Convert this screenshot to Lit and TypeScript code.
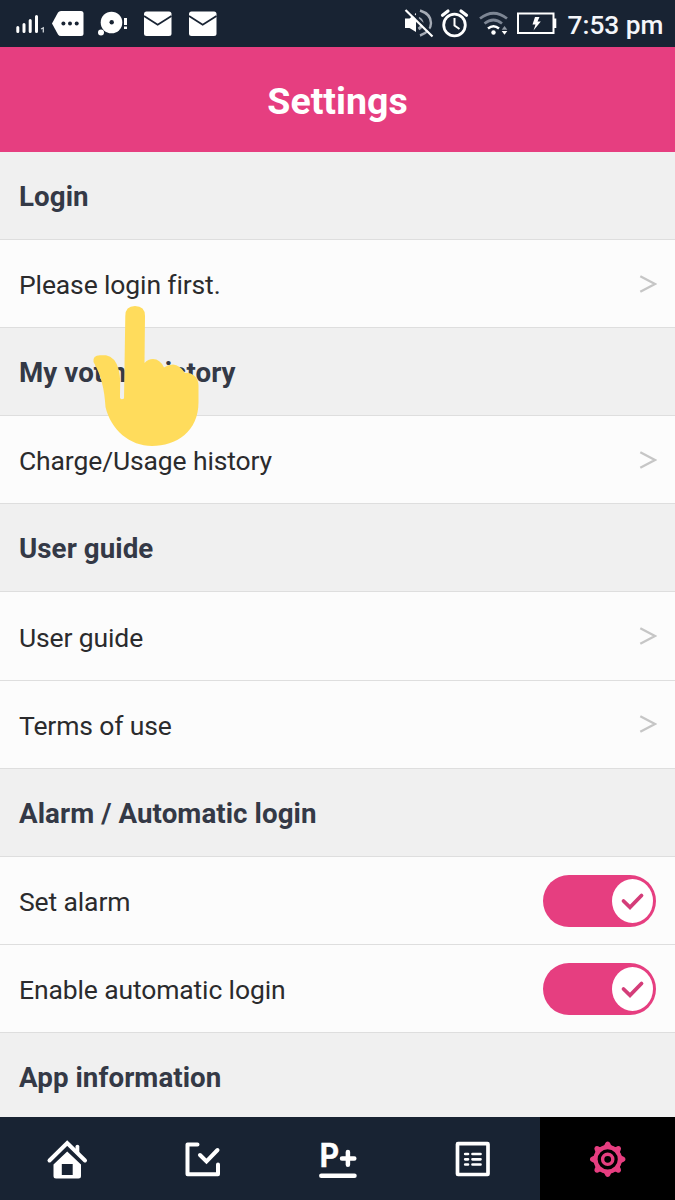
import { LitElement, html, css, svg, nothing } from "lit";
import { customElement, property } from "lit/decorators.js";

type Row = { kind: "section" | "link" | "toggle"; label: string };

const ROWS: Row[] = [
  { kind: "section", label: "Login" },
  { kind: "link", label: "Please login first." },
  { kind: "section", label: "My voting history" },
  { kind: "link", label: "Charge/Usage history" },
  { kind: "section", label: "User guide" },
  { kind: "link", label: "User guide" },
  { kind: "link", label: "Terms of use" },
  { kind: "section", label: "Alarm / Automatic login" },
  { kind: "toggle", label: "Set alarm" },
  { kind: "toggle", label: "Enable automatic login" },
  { kind: "section", label: "App information" },
];

@customElement("status-bar")
class StatusBar extends LitElement {
  static styles = css`
    :host { display: flex; justify-content: space-between; height: 47px; background: #182333; color: #fff; }
    svg { display: block; flex: none; }
    .right { display: flex; }
    .time { width: 107.500px; font-size: 26.300px; font-weight: 500; line-height: 50px; white-space: nowrap; color: #f4f6fa; }
  `;
  render() {
    return html`
      <svg width="225" height="47" viewBox="0 0 225 47" fill="#fff">
        <g stroke="#fff" stroke-width="3" stroke-linecap="round">
          <path d="M17.800 27.500V31.500M24 24.500V31.500M30.200 20.500V31.500M36.500 16.500V31.500" />
        </g>
        <path d="M41 29l2.300-1.200V32.500" fill="none" stroke="#cdd2d8" stroke-width="1.300" />
        <path d="M61 11H81Q83.500 11 83.500 13.500V33.500Q83.500 36 81 36H61Q59 36 58 34.500L52 23.500L58 12.500Q59 11 61 11Z" />
        <g fill="#182333"><circle cx="63.400" cy="23.500" r="2" /><circle cx="70" cy="23.500" r="2" /><circle cx="76.700" cy="23.500" r="2" /></g>
        <circle cx="111.500" cy="22.500" r="10.800" /><circle cx="101" cy="32.400" r="3" />
        <circle cx="111.700" cy="22.300" r="2.200" fill="#182333" />
        <path d="M124 18H127V25H124ZM124 26.500H127V29H124Z" />
        ${[144, 189].map(
          (x) => svg`<rect x=${x} y="11.500" width="27.500" height="24.500" rx="2.500" />
            <path d=${`M${x} 16L${x + 13.7} 24.800L${x + 27.5} 16`} fill="none" stroke="#182333" stroke-width="1.800" />`,
        )}
      </svg>
      <div class="right">
        <svg width="167" height="47" viewBox="400 0 167 47" fill="none" stroke="#fff">
          <path d="M404 18.500H408.500L415 13V32L408.500 28H404Z" fill="#fff" stroke="none" />
          <path d="M417.500 18.500Q421 20 421 23.500Q421 27 417.500 29" stroke="#a5abb5" stroke-width="3" />
          <path d="M419 10.500Q430 14 430 23Q430 31.500 419 35.500" stroke="#a5abb5" stroke-width="2.400" />
          <path d="M406.500 9L433.500 35.500" stroke="#182333" stroke-width="2.500" />
          <path d="M404.500 10L431.500 36.500" stroke-width="2.200" />
          <circle cx="453.500" cy="25" r="10.800" stroke-width="2.800" />
          <path d="M453.500 18V25.500L458.500 29" stroke-width="2" />
          <path d="M441.500 15.300L447 11M460 11L465.500 15.300" stroke-width="3.200" stroke-linecap="round" />
          <path d="M479 18.500Q492.500 8 506 18.500M483.500 23.500Q492.500 16.500 501 23.500" stroke="#7d8694" stroke-width="2.700" />
          <path d="M487 28.500Q492.500 24 498 28.500" stroke-width="2.500" />
          <circle cx="492.500" cy="32.500" r="2.200" fill="#fff" stroke="none" />
          <path d="M500.700 29.700L503.500 26L506.300 29.700Z" fill="#8f97a3" stroke="none" />
          <path d="M500.700 31L503.500 34.700L506.300 31Z" fill="#fff" stroke="none" />
          <rect x="517" y="13.500" width="35.500" height="19.500" stroke-width="2" />
          <path d="M553 18.500H555.300V28H553Z" fill="#fff" stroke="none" />
          <path d="M534 17H538.500L536.500 21.500H539.800L532.500 30.500L534.500 24.500H531.500Z" fill="#fff" stroke="none" />
        </svg>
        <span class="time">7:53 pm</span>
      </div>
    `;
  }
}

@customElement("settings-row")
class SettingsRow extends LitElement {
  @property() kind = "link";
  @property() label = "";
  static styles = css`
    :host { display: block; flex: none; }
    .row {
      box-sizing: border-box; height: 88.1px; padding: 2px 19px 0; display: flex; align-items: center;
      justify-content: space-between; border-bottom: 1px solid #dedede; background: #fcfcfc;
      font-size: 26.500px; letter-spacing: -0.130px; color: #2b2b2d; white-space: nowrap;
    }
    .section { background: #f0f0f0; font-size: 27.700px; letter-spacing: 0.070px; font-weight: 700; color: #343946; }
    svg { display: block; }
    .chevron { margin: -2px -1px 0 0; }
    .switch { margin-top: -1px; }
  `;
  render() {
    return html`<div class="row ${this.kind}">
      <span>${this.label}</span>
      ${this.kind === "link"
        ? html`<svg class="chevron" width="18" height="18" fill="none" stroke="#c6c6c6" stroke-width="2.300"><path d="M1.300 1.200L16 9L1.300 16.800" /></svg>`
        : nothing}
      ${this.kind === "toggle"
        ? html`<svg class="switch" width="113" height="52">
            <rect width="113" height="52" rx="26" fill="#e63e80" />
            <ellipse cx="89.500" cy="26" rx="20.500" ry="22" fill="#fff" />
            <path d="M80.500 26L87 32.300L98.500 20.500" fill="none" stroke="#d43d79" stroke-width="3.800" stroke-linecap="round" />
          </svg>`
        : nothing}
    </div>`;
  }
}

@customElement("tab-bar")
class TabBar extends LitElement {
  static styles = css`
    :host { display: grid; grid-template-columns: repeat(5, 1fr); height: 83px; flex: none; background: #182333; }
    .tab { display: flex; align-items: center; justify-content: center; }
    .active { background: #000; }
    .p { font: 700 34px Roboto, sans-serif; }
  `;
  render() {
    const teeth = [0, 45, 90, 135, 180, 225, 270, 315];
    return html`
      <div class="tab"><svg width="44" height="44" viewBox="45.500 1136.500 44 44" fill="#fff">
        <path d="M49 1160L66.700 1142.500L84.500 1160" fill="none" stroke="#fff" stroke-width="4" stroke-linecap="round" />
        <path d="M75 1146Q75 1144.300 76.900 1144.300Q78.800 1144.300 78.800 1146V1155L75 1151Z" />
        <path fill-rule="evenodd" d="M66.700 1151L80.500 1164V1175.500Q80.500 1178 78 1178H55.500Q53 1178 53 1175.500V1164ZM61.300 1163.500V1174.500H72.200V1163.500Z" />
      </svg></div>
      <div class="tab"><svg width="44" height="44" viewBox="180.500 1136.500 44 44" fill="none" stroke="#fff" stroke-width="4" stroke-linecap="round" stroke-linejoin="round">
        <path d="M197 1144H187V1173.700H217.500V1164" />
        <path d="M199.500 1154.500L206 1161L217 1149.500" stroke-linejoin="miter" />
      </svg></div>
      <div class="tab"><svg width="60" height="60" viewBox="307.500 1128.500 60 60" fill="#fff">
        <text class="p" transform="translate(319.300 1166.600) scale(0.880 1)" stroke="#fff" stroke-width="0.500">P</text>
        <path d="M341.500 1158H353.800M347.400 1151.500V1164.300M320.800 1175.300H354" stroke="#fff" stroke-width="4.500" stroke-linecap="round" />
      </svg></div>
      <div class="tab"><svg width="44" height="44" viewBox="450.500 1136.500 44 44" fill="none" stroke="#fff">
        <rect x="457" y="1143.200" width="30.500" height="30.800" rx="0.500" stroke-width="3.700" stroke-linejoin="round" />
        <path d="M464.700 1153.500H467.500M472 1153.500H480M464.700 1158.800H467.500M472 1158.800H480M464.700 1164H467.500M472 1164H480" stroke-width="2.700" stroke-linecap="round" />
      </svg></div>
      <div class="tab active"><svg width="44" height="44" viewBox="-21.700 -22.300 44 44" fill="none" stroke="#e63e80">
        <circle r="12.200" stroke-width="4.200" />
        ${teeth.map((a) => svg`<path transform=${`rotate(${a})`} d="M-5.300 -12.500Q-3 -13.500 -2.500 -16Q-1.800 -17.800 0 -17.800Q1.800 -17.800 2.500 -16Q3 -13.500 5.300 -12.500Z" fill="#e63e80" stroke="none" />`)}
        <circle r="5.100" stroke-width="3.400" />
      </svg></div>
    `;
  }
}

@customElement("app-root")
class AppRoot extends LitElement {
  static styles = css`
    :host { display: flex; flex-direction: column; position: relative; height: 1200px; overflow: hidden; font-family: Roboto, sans-serif; background: #f0f0f0; }
    .title { flex: none; height: 105px; margin: 0; background: #e63e80; color: #fff; font-size: 37.500px; font-weight: 700; line-height: 109px; text-align: center; }
    status-bar { flex: none; }
    .list { flex: 1; min-height: 0; overflow: hidden; display: flex; flex-direction: column; }
    .hand { position: absolute; left: 90px; top: 300px; }
  `;
  render() {
    return html`
      <status-bar></status-bar>
      <h1 class="title">Settings</h1>
      <div class="list">
        ${ROWS.map((r) => html`<settings-row .kind=${r.kind} .label=${r.label}></settings-row>`)}
      </div>
      <tab-bar></tab-bar>
      <svg class="hand" width="115" height="150" viewBox="90 300 115 150" fill="#ffdc5c">
        <path d="M125.300 316Q125.300 306 135 306Q145 306 145 316L144.500 363Q148 359 153 359Q160 359 164 367.500Q168 364.500 173 364.500Q180 365 185 373Q190 372 194 375.500Q198.500 379 198.500 386V402C198.500 432 176 446 152 446C130 446 111 430 105.500 407C104.500 389 101 375 93.500 362Q92.500 355.500 100 355.300H106Q115 357 118.500 369C121 378 120 388 120 398Q121 400 124 398.500Z" />
      </svg>
    `;
  }
}
